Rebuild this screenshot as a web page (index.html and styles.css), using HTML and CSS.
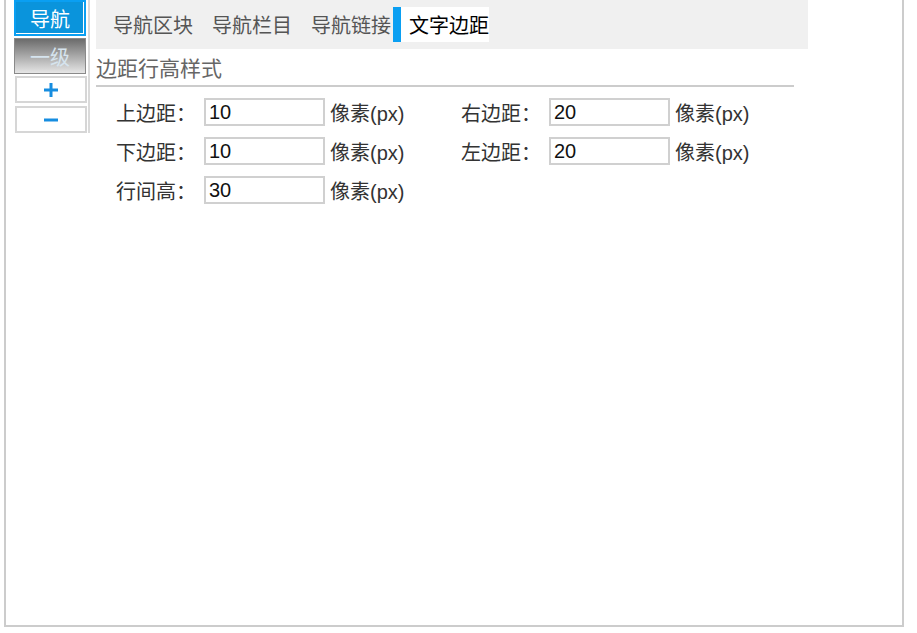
FILE: index.html
```html
<!DOCTYPE html>
<html lang="zh-CN">
<head>
<meta charset="utf-8">
<title>文字边距</title>
<link rel="stylesheet" href="styles.css">
</head>
<body>
<div class="frame">
  <div class="layout">
    <aside class="side">
      <div class="btn btn-nav">导航</div>
      <div class="btn btn-level">一级</div>
      <div class="btn btn-op">
        <svg width="16" height="16" viewBox="0 0 16 16"><path d="M8 1V15M1 8H15" stroke="#168de0" stroke-width="3" fill="none"/></svg>
      </div>
      <div class="btn btn-op btn-minus">
        <svg width="16" height="4" viewBox="0 0 16 4"><path d="M1 2H15" stroke="#168de0" stroke-width="3" fill="none"/></svg>
      </div>
    </aside>
    <main class="main">
      <nav class="tabs">
        <span class="tab">导航区块</span>
        <span class="tab">导航栏目</span>
        <span class="tab">导航链接</span>
        <span class="tab active">文字边距</span>
      </nav>
      <h2 class="title">边距行高样式</h2>
      <div class="form">
        <div class="row">
          <div class="field"><span class="label">上边距：</span><input class="input" type="text" value="10"><span class="unit">像素(px)</span></div>
          <div class="field"><span class="label">右边距：</span><input class="input" type="text" value="20"><span class="unit">像素(px)</span></div>
        </div>
        <div class="row">
          <div class="field"><span class="label">下边距：</span><input class="input" type="text" value="10"><span class="unit">像素(px)</span></div>
          <div class="field"><span class="label">左边距：</span><input class="input" type="text" value="20"><span class="unit">像素(px)</span></div>
        </div>
        <div class="row">
          <div class="field"><span class="label">行间高：</span><input class="input" type="text" value="30"><span class="unit">像素(px)</span></div>
        </div>
      </div>
    </main>
  </div>
</div>
</body>
</html>
```

FILE: styles.css
```css
html, body {
  margin: 0;
  padding: 0;
  background: #fff;
}
body {
  font-family: "Liberation Sans", "Noto Sans CJK SC", sans-serif;
  color: #333;
}
.frame {
  margin-left: 4px;
  width: 896px;
  height: 625px;
  border: 2px solid #cccccc;
  border-top: none;
}
.layout {
  display: flex;
  align-items: flex-start;
  padding-left: 8px;
}
.side {
  width: 74px;
  height: 133px;
  border-right: 2px solid #dadada;
  display: flex;
  flex-direction: column;
}
.btn {
  box-sizing: border-box;
  width: 72px;
  display: flex;
  align-items: center;
  justify-content: center;
  font-family: "Noto Sans CJK SC", sans-serif;
  font-size: 20px;
}
.btn-nav {
  height: 36px;
  background: #0a94dc;
  border: 2px solid #0a9ff2;
  box-shadow: inset -1px -1px 0 #ffffff;
  color: #ffffff;
}
.btn-level {
  margin-top: 2px;
  height: 36px;
  border: 1px solid #8a8a8a;
  background: linear-gradient(#6b6b6b, #e6e6e6);
  color: #d6e4ee;
}
.btn-op {
  margin-top: 2px;
  margin-left: 1px;
  height: 27px;
  border: 2px solid #d6d6d6;
  background: #fff;
}
.btn-minus {
  margin-top: 3px;
}
.main {
  margin-left: 6px;
}
.tabs {
  box-sizing: border-box;
  width: 712px;
  height: 49px;
  background: #f0f0f0;
  display: flex;
  align-items: flex-start;
  gap: 3px;
  padding: 7px 0 0 1px;
}
.tab {
  height: 35px;
  line-height: 35px;
  border-left: 8px solid transparent;
  padding-left: 8px;
  font-family: "Noto Sans CJK SC", sans-serif;
  font-size: 20px;
  color: #555;
}
.tab.active {
  margin-left: -1px;
  border-left-color: #0a9ff2;
  background: #fff;
  color: #000;
}
.title {
  margin: 0;
  width: 698px;
  height: 36px;
  line-height: 36px;
  font-family: "Noto Sans CJK SC", sans-serif;
  font-size: 21px;
  font-weight: normal;
  color: #666;
  border-bottom: 2px solid #cccccc;
}
.form {
  padding: 11px 0 0 20px;
}
.row {
  display: flex;
  height: 28px;
  align-items: center;
  margin-bottom: 11px;
}
.field {
  width: 345px;
  display: flex;
  align-items: center;
}
.label {
  width: 88px;
  font-size: 20px;
  color: #333;
}
.input {
  box-sizing: border-box;
  width: 121px;
  height: 28px;
  margin: 0;
  border: 2px solid #d0d0d0;
  padding: 0 0 0 3px;
  font-family: "Liberation Sans", "Noto Sans CJK SC", sans-serif;
  font-size: 20px;
  color: #111;
  background: #fff;
  outline: none;
}
.unit {
  margin-left: 5px;
  font-size: 20px;
  color: #333;
}
```
